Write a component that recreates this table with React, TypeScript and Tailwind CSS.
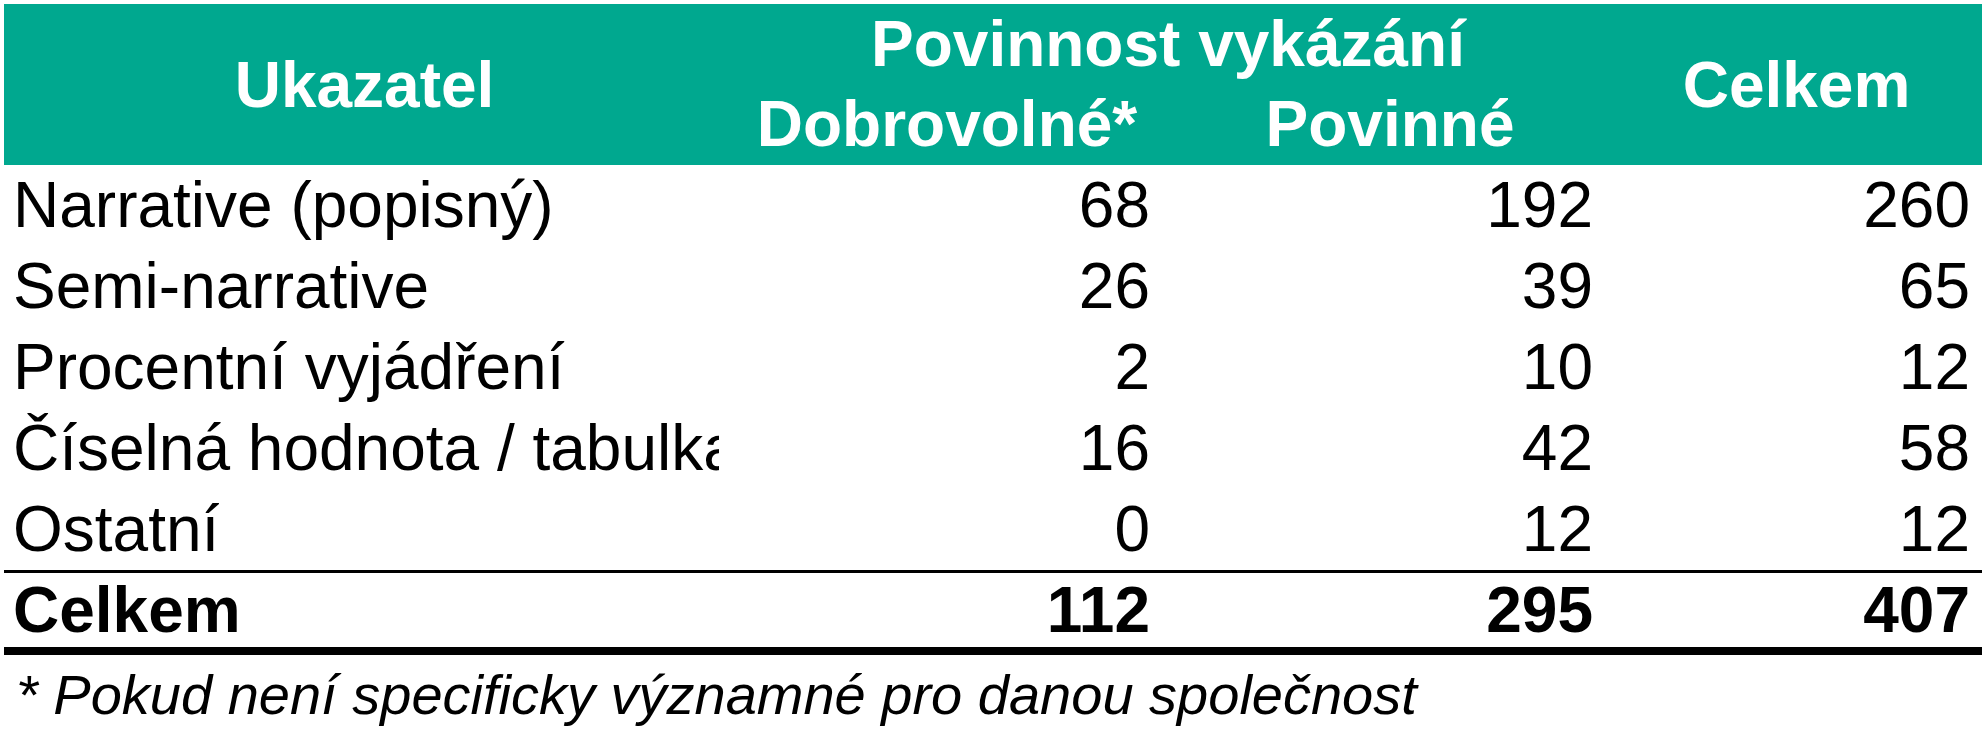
const ROWS = [
  { label: 'Narrative (popisný)', dob: 68, pov: 192, total: 260 },
  { label: 'Semi-narrative', dob: 26, pov: 39, total: 65 },
  { label: 'Procentní vyjádření', dob: 2, pov: 10, total: 12 },
  { label: 'Číselná hodnota / tabulka', dob: 16, pov: 42, total: 58 },
  { label: 'Ostatní', dob: 0, pov: 12, total: 12 },
]

const COLS = 'grid grid-cols-[721px_444px_442px_371px]'

export default function App() {
  return (
    <div className="min-h-screen bg-white pl-[4px] pt-[4px] font-['Liberation_Sans',Arial,sans-serif] text-black">
      <div className="w-[1978px]">
        {/* Header */}
        <div className={`${COLS} grid-rows-[80px_81px] bg-[#00a88f] text-[64px] font-bold text-white`}>
          <div className="row-span-2 flex items-center justify-center leading-[80px]">Ukazatel</div>
          <div className="col-span-2 text-center leading-[80px]">Povinnost vykázání</div>
          <div className="row-span-2 flex items-center justify-center leading-[80px]">Celkem</div>
          <div className="text-center leading-[80px]">Dobrovolné*</div>
          <div className="text-center leading-[80px]">Povinné</div>
        </div>

        {/* Body */}
        {ROWS.map((r) => (
          <div key={r.label} className={`${COLS} text-[64px] leading-[81px]`}>
            <div className="overflow-hidden whitespace-nowrap pl-[9px] pr-[6px]">
              <span className="block overflow-hidden">{r.label}</span>
            </div>
            <div className="pr-[19px] text-right">{r.dob}</div>
            <div className="pr-[18px] text-right">{r.pov}</div>
            <div className="pr-[12px] text-right">{r.total}</div>
          </div>
        ))}

        {/* Total */}
        <div className={`${COLS} border-t-[3px] border-b-[8px] border-black text-[64px] font-bold leading-[74px]`}>
          <div className="pl-[9px]">Celkem</div>
          <div className="pr-[19px] text-right">112</div>
          <div className="pr-[18px] text-right">295</div>
          <div className="pr-[12px] text-right">407</div>
        </div>

        <p className="pl-[12px] text-[56px] italic leading-[80px]">
          * Pokud není specificky významné pro danou společnost
        </p>
      </div>
    </div>
  )
}
